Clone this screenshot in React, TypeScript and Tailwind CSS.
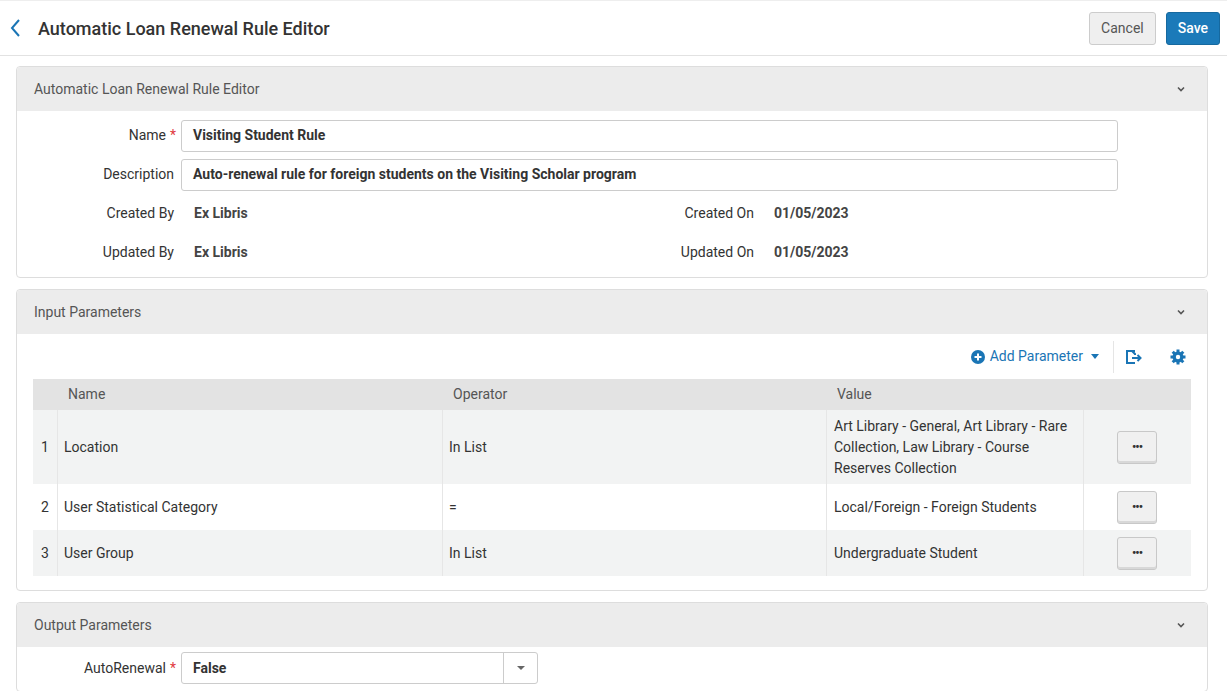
import React from "react";

const Chevron = () => (
  <svg width="10" height="10" viewBox="0 0 10 10" className="mr-[4px]"><path d="M2 3.5 L5 6.5 L8 3.5" stroke="#555" strokeWidth="1.6" fill="none" /></svg>
);

const PanelHeader = ({ title }: { title: string }) => (
  <div className="h-[44px] bg-[#ececec] flex items-center justify-between px-[17px] rounded-t-[4px]">
    <span className="text-[14px] text-[#555]">{title}</span>
    <Chevron />
  </div>
);

const Dots = () => (
  <button className="w-[40px] h-[33px] border border-[#c8c8c8] rounded-[3px] bg-[#f0f0f0] shadow-[inset_0_-2px_0_#d8d8d8] flex items-center justify-center text-[#333] font-bold text-[12px] tracking-[-1px]">•••</button>
);

export default function App() {
  const rows = [
    { n: 1, name: "Location", op: "In List", val: "Art Library - General, Art Library - Rare Collection, Law Library - Course Reserves Collection", h: "h-[74px]", bg: "bg-[#f2f3f3]" },
    { n: 2, name: "User Statistical Category", op: "=", val: "Local/Foreign - Foreign Students", h: "h-[46px]", bg: "bg-white" },
    { n: 3, name: "User Group", op: "In List", val: "Undergraduate Student", h: "h-[46px]", bg: "bg-[#f2f3f3]" },
  ];
  return (
    <div className="w-[1227px] h-[691px] bg-white text-[#333] overflow-hidden" style={{ fontFamily: "Roboto, 'Liberation Sans', sans-serif" }}>
      <div className="h-[56px] border-b border-[#e2e2e2] flex items-center px-[8px] border-t border-t-[#eee]">
        <svg width="14" height="20" viewBox="0 0 14 20" className="ml-[1px]"><path d="M10 2 L3 10 L10 18" stroke="#1a75b5" strokeWidth="2" fill="none" /></svg>
        <h1 className="ml-[15px] text-[18px] font-medium text-[#333]">Automatic Loan Renewal Rule Editor</h1>
        <div className="ml-auto flex gap-[10px] mr-[-1px]">
          <button className="h-[33px] px-[11px] border border-[#ccc] rounded-[3px] bg-[#efefef] text-[14px] text-[#555]">Cancel</button>
          <button className="h-[33px] px-[11px] rounded-[3px] bg-[#1b7ab9] border border-[#16699f] text-[14px] text-white font-medium">Save</button>
        </div>
      </div>

      <div className="px-[16px] pt-[10px] pr-[19px] flex flex-col gap-[11px]">
        <div className="border border-[#ddd] rounded-[4px]">
          <PanelHeader title="Automatic Loan Renewal Rule Editor" />
          <div className="pt-[5px] pb-[5px] text-[14px]">
            {[["Name", "Visiting Student Rule", true], ["Description", "Auto-renewal rule for foreign students on the Visiting Scholar program", false]].map(([l, v, req]) => (
              <div key={l as string} className="flex items-center h-[39px]">
                <div className="w-[160px] text-right pr-[1px] text-[#333]">{l as string}{req ? <span className="text-[#e0393e] ml-[4px]">*</span> : <span className="ml-[2px]" />}</div>
                <div className="ml-[4px] w-[937px] h-[32px] border border-[#ccc] rounded-[3px] flex items-center px-[11px] font-bold">{v as string}</div>
              </div>
            ))}
            {[["Created By", "Created On"], ["Updated By", "Updated On"]].map(([a, b]) => (
              <div key={a} className="flex items-center h-[39px]">
                <div className="w-[157px] text-right text-[#333]">{a}</div>
                <div className="ml-[20px] w-[402px] font-bold text-[#444]">Ex Libris</div>
                <div className="w-[158px] text-right text-[#333]">{b}</div>
                <div className="ml-[20px] font-bold text-[#444]">01/05/2023</div>
              </div>
            ))}
          </div>
        </div>

        <div className="border border-[#ddd] rounded-[4px]">
          <PanelHeader title="Input Parameters" />
          <div className="px-[16px] pb-[14px]">
            <div className="h-[45px] flex items-center justify-end">
              <span className="flex items-center gap-[5px] text-[#1a75b5] text-[14px]">
                <svg width="14" height="14" viewBox="0 0 14 14"><circle cx="7" cy="7" r="7" fill="#1a75b5" /><path d="M7 3.5v7M3.5 7h7" stroke="white" strokeWidth="2" /></svg>
                Add Parameter
                <svg width="8" height="5" viewBox="0 0 8 5" className="ml-[3px]"><path d="M0 0h8L4 5z" fill="#1a75b5" /></svg>
              </span>
              <div className="w-px h-[32px] bg-[#e5e5e5] ml-[14px] mr-[11px]" />
              <svg width="18" height="16" viewBox="0 0 18 16" className="mr-[27px]"><path d="M9 3V2H2v12h7v-1" stroke="#1a75b5" strokeWidth="2" fill="none" /><path d="M2 2h5l3 3v1" stroke="#1a75b5" strokeWidth="2" fill="none"/><path d="M7 9h8M12.5 6l3 3-3 3" stroke="#1a75b5" strokeWidth="2" fill="none" /></svg>
              <svg width="16" height="16" viewBox="0 0 16 16" className="mr-[5px]"><g fill="#1a75b5"><circle cx="8" cy="8" r="5.5" />{[0,45,90,135,180,225,270,315].map(r => <rect key={r} x="6.5" y="0.5" width="3" height="4" transform={`rotate(${r} 8 8)`} />)}</g><circle cx="8" cy="8" r="2.2" fill="white" /></svg>
            </div>
            <div className="text-[14px]">
              <div className="flex h-[31px] bg-[#e3e3e3] items-center text-[#555]">
                <div className="w-[25px]" />
                <div className="w-[385px] pl-[10px]">Name</div>
                <div className="w-[384px] pl-[10px]">Operator</div>
                <div className="pl-[10px]">Value</div>
              </div>
              {rows.map(r => (
                <div key={r.n} className={`flex ${r.h} ${r.bg} items-stretch`}>
                  <div className="w-[25px] flex items-center pl-[8px] border-r border-[#e6e6e6]">{r.n}</div>
                  <div className="w-[385px] flex items-center pl-[6px] border-r border-[#e6e6e6]">{r.name}</div>
                  <div className="w-[384px] flex items-center pl-[6px] border-r border-[#e6e6e6]">{r.op}</div>
                  <div className="w-[257px] flex items-center pl-[7px] pr-[8px] leading-[21px] border-r border-[#e6e6e6]">{r.val}</div>
                  <div className="flex-1 flex items-center pl-[33px]"><Dots /></div>
                </div>
              ))}
            </div>
          </div>
        </div>

        <div className="border border-[#ddd] rounded-[4px]">
          <PanelHeader title="Output Parameters" />
          <div className="flex items-center h-[44px] text-[14px] pb-[2px]">
            <div className="w-[160px] text-right pr-[1px]">AutoRenewal<span className="text-[#e0393e] ml-[4px]">*</span></div>
            <div className="ml-[4px] w-[357px] h-[32px] border border-[#ccc] rounded-[3px] flex items-center">
              <span className="flex-1 px-[11px] font-bold">False</span>
              <div className="w-[34px] h-full border-l border-[#ccc] flex items-center justify-center">
                <svg width="8" height="4" viewBox="0 0 8 4"><path d="M0 0h8L4 4z" fill="#666" /></svg>
              </div>
            </div>
          </div>
        </div>
      </div>
    </div>
  );
}
